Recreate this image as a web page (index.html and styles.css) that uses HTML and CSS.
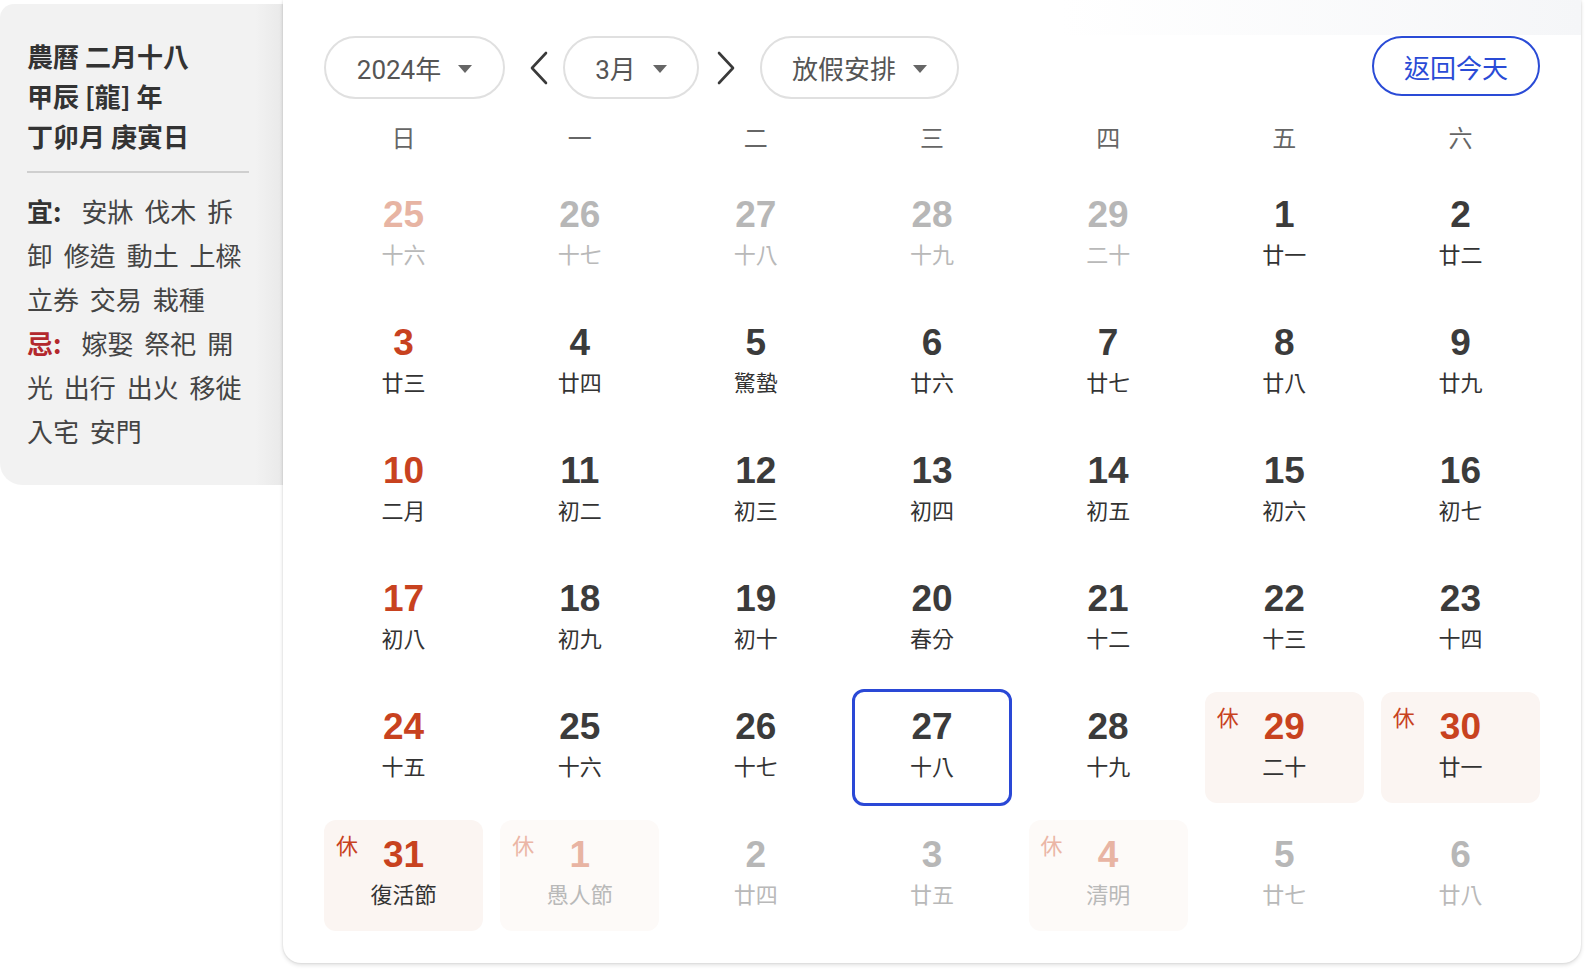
FILE: index.html
```html
<!DOCTYPE html>
<html lang="zh-Hant">
<head>
<meta charset="utf-8">
<title>萬年曆</title>
<link rel="stylesheet" href="styles.css">
</head>
<body>
<div class="page">
  <aside class="almanac">
    <div class="almanac-head">
      <div>農曆 二月十八</div>
      <div>甲辰 [龍] 年</div>
      <div>丁卯月 庚寅日</div>
    </div>
    <div class="almanac-rule"></div>
    <p class="almanac-list"><b class="yi">宜:</b><span>安牀</span> <span>伐木</span> <span>拆</span><span>卸</span> <span>修造</span> <span>動土</span> <span>上樑</span> <span>立券</span> <span>交易</span> <span>栽種</span></p>
    <p class="almanac-list"><b class="ji">忌:</b><span>嫁娶</span> <span>祭祀</span> <span>開</span><span>光</span> <span>出行</span> <span>出火</span> <span>移徙</span> <span>入宅</span> <span>安門</span></p>
  </aside>

  <section class="card">
    <div class="controls">
      <button class="pill pill-year"><span>2024年</span><i class="caret"></i></button>
      <button class="chev chev-prev" aria-label="上個月">
        <svg width="20" height="34" viewBox="0 0 20 34"><polyline points="17,2 3,17 17,32" fill="none" stroke="#3a3a3a" stroke-width="2.6" stroke-linejoin="round" stroke-linecap="round"/></svg>
      </button>
      <button class="pill pill-month"><span>3月</span><i class="caret"></i></button>
      <button class="chev chev-next" aria-label="下個月">
        <svg width="20" height="34" viewBox="0 0 20 34"><polyline points="3,2 17,17 3,32" fill="none" stroke="#3a3a3a" stroke-width="2.6" stroke-linejoin="round" stroke-linecap="round"/></svg>
      </button>
      <button class="pill pill-holiday"><span>放假安排</span><i class="caret"></i></button>
      <button class="today">返回今天</button>
    </div>

    <div class="weekdays">
      <div>日</div><div>一</div><div>二</div><div>三</div><div>四</div><div>五</div><div>六</div>
    </div>

    <div class="grid">
      <div class="day other sun"><div class="num">25</div><div class="lunar">十六</div></div>
      <div class="day other"><div class="num">26</div><div class="lunar">十七</div></div>
      <div class="day other"><div class="num">27</div><div class="lunar">十八</div></div>
      <div class="day other"><div class="num">28</div><div class="lunar">十九</div></div>
      <div class="day other"><div class="num">29</div><div class="lunar">二十</div></div>
      <div class="day"><div class="num">1</div><div class="lunar">廿一</div></div>
      <div class="day"><div class="num">2</div><div class="lunar">廿二</div></div>

      <div class="day sun"><div class="num">3</div><div class="lunar">廿三</div></div>
      <div class="day"><div class="num">4</div><div class="lunar">廿四</div></div>
      <div class="day"><div class="num">5</div><div class="lunar">驚蟄</div></div>
      <div class="day"><div class="num">6</div><div class="lunar">廿六</div></div>
      <div class="day"><div class="num">7</div><div class="lunar">廿七</div></div>
      <div class="day"><div class="num">8</div><div class="lunar">廿八</div></div>
      <div class="day"><div class="num">9</div><div class="lunar">廿九</div></div>

      <div class="day sun"><div class="num">10</div><div class="lunar">二月</div></div>
      <div class="day"><div class="num">11</div><div class="lunar">初二</div></div>
      <div class="day"><div class="num">12</div><div class="lunar">初三</div></div>
      <div class="day"><div class="num">13</div><div class="lunar">初四</div></div>
      <div class="day"><div class="num">14</div><div class="lunar">初五</div></div>
      <div class="day"><div class="num">15</div><div class="lunar">初六</div></div>
      <div class="day"><div class="num">16</div><div class="lunar">初七</div></div>

      <div class="day sun"><div class="num">17</div><div class="lunar">初八</div></div>
      <div class="day"><div class="num">18</div><div class="lunar">初九</div></div>
      <div class="day"><div class="num">19</div><div class="lunar">初十</div></div>
      <div class="day"><div class="num">20</div><div class="lunar">春分</div></div>
      <div class="day"><div class="num">21</div><div class="lunar">十二</div></div>
      <div class="day"><div class="num">22</div><div class="lunar">十三</div></div>
      <div class="day"><div class="num">23</div><div class="lunar">十四</div></div>

      <div class="day sun"><div class="num">24</div><div class="lunar">十五</div></div>
      <div class="day"><div class="num">25</div><div class="lunar">十六</div></div>
      <div class="day"><div class="num">26</div><div class="lunar">十七</div></div>
      <div class="day today-cell"><div class="num">27</div><div class="lunar">十八</div></div>
      <div class="day"><div class="num">28</div><div class="lunar">十九</div></div>
      <div class="day rest"><span class="rest-tag">休</span><div class="num">29</div><div class="lunar">二十</div></div>
      <div class="day rest"><span class="rest-tag">休</span><div class="num">30</div><div class="lunar">廿一</div></div>

      <div class="day rest"><span class="rest-tag">休</span><div class="num">31</div><div class="lunar">復活節</div></div>
      <div class="day rest other"><span class="rest-tag">休</span><div class="num">1</div><div class="lunar">愚人節</div></div>
      <div class="day other"><div class="num">2</div><div class="lunar">廿四</div></div>
      <div class="day other"><div class="num">3</div><div class="lunar">廿五</div></div>
      <div class="day rest other"><span class="rest-tag">休</span><div class="num">4</div><div class="lunar">清明</div></div>
      <div class="day other"><div class="num">5</div><div class="lunar">廿七</div></div>
      <div class="day other"><div class="num">6</div><div class="lunar">廿八</div></div>
    </div>
  </section>
</div>
</body>
</html>
```

FILE: styles.css
```css
* { box-sizing: border-box; }

html, body {
  margin: 0;
  padding: 0;
  background: #fff;
}

body {
  font-family: "Liberation Sans", "Noto Sans CJK TC", sans-serif;
  color: #333;
}

.page {
  display: flex;
  align-items: flex-start;
  width: 1588px;
  height: 970px;
  overflow: hidden;
}

/* ---------- left almanac panel ---------- */
.almanac {
  flex: 0 0 283px;
  margin-top: 4px;
  padding: 32px 24px 32px 27px;
  background: linear-gradient(to right, #f2f2f2 0, #f2f2f2 255px, #e9e9e9 283px);
  border-radius: 14px 0 0 22px;
}

.almanac-head {
  font-family: "Noto Sans CJK TC", sans-serif;
  font-size: 26px;
  font-weight: 700;
  line-height: 40px;
  color: #333;
  white-space: nowrap;
}

.almanac-rule {
  height: 2px;
  width: 222px;
  background: #cfcfcf;
  margin: 15px 0 16px;
}

.almanac-list {
  margin: 0;
  width: 226px;
  font-family: "Noto Sans CJK TC", sans-serif;
  font-size: 26px;
  line-height: 44px;
  color: #444;
  word-spacing: 5px;
}

.almanac-list b {
  display: inline-block;
  font-weight: 700;
  margin-right: 20px;
}
.almanac-list .yi { color: #333; }
.almanac-list .ji { color: #b3282d; }

/* ---------- calendar card ---------- */
.card {
  flex: 0 0 1298px;
  height: 963px;
  padding: 36px 41px 32px;
  background:
    linear-gradient(to right, rgba(246,247,249,0) 60%, #f5f6f8 100%) top left / 100% 35px no-repeat,
    #fff;
  border-radius: 0 0 18px 18px;
  box-shadow: 0 2px 4px rgba(0,0,0,0.13), 0 0 2px rgba(0,0,0,0.12);
  position: relative;
  z-index: 1;
}

.controls {
  display: flex;
  align-items: flex-start;
  height: 63px;
}

button {
  font: inherit;
  background: none;
  border: 0;
  padding: 0;
  margin: 0;
  cursor: pointer;
  white-space: nowrap;
}

.pill {
  flex: 0 0 auto;
  display: flex;
  align-items: center;
  justify-content: center;
  gap: 17px;
  height: 63px;
  padding: 0;
  border: 2px solid #e0e0e0;
  border-radius: 32px;
  background: #fff;
  font-family: "Roboto", "Noto Sans CJK TC", sans-serif;
  font-size: 26px;
  color: #555;
}

.pill-year { width: 181px; }
.pill-month { width: 136px; }
.pill-holiday { width: 199px; }

.caret {
  flex: 0 0 auto;
  width: 0;
  height: 0;
  border-left: 7px solid transparent;
  border-right: 7px solid transparent;
  border-top: 8px solid #666;
  margin-top: 2px;
}

.chev {
  flex: 0 0 auto;
  display: flex;
  align-items: center;
  height: 63px;
}
.chev-prev { margin: 0 14px 0 24px; }
.chev-next { margin: 0 24px 0 17px; }

.today {
  flex: 0 0 auto;
  margin-left: auto;
  width: 168px;
  height: 60px;
  border: 2px solid #2a4bd6;
  border-radius: 30px;
  font-family: "Noto Sans CJK TC", sans-serif;
  font-size: 26px;
  color: #2a4bd6;
}

.weekdays {
  display: grid;
  grid-template-columns: repeat(7, 1fr);
  column-gap: 17px;
  margin-top: 18px;
  height: 40px;
  line-height: 40px;
  text-align: center;
  font-family: "Noto Sans CJK TC", sans-serif;
  font-size: 24px;
  color: #666;
}

.grid {
  display: grid;
  grid-template-columns: repeat(7, 1fr);
  grid-auto-rows: 111px;
  gap: 17px;
  margin-top: 23px;
}

.day {
  position: relative;
  padding-top: 15px;
  text-align: center;
  border-radius: 12px;
}

.num {
  font-family: "Liberation Sans", sans-serif;
  font-weight: 700;
  font-size: 37px;
  line-height: 40px;
  color: #3b3b3b;
}

.lunar {
  margin-top: 4px;
  font-family: "Noto Sans CJK TC", sans-serif;
  font-size: 22px;
  line-height: 28px;
  color: #333;
}

.sun .num { color: #c8421f; }

.other .num { color: #b7b7b7; }
.other .lunar { color: #b9b9b9; }
.other.sun .num { color: #e7b4a3; }

.rest { background: #fbf5f2; }
.rest .num { color: #c8421f; }
.rest.other { background: #fdfaf8; }
.rest.other .num { color: #e8b4a3; }

.rest-tag {
  position: absolute;
  left: 12px;
  top: 10px;
  font-family: "Noto Sans CJK TC", sans-serif;
  font-size: 22px;
  line-height: 28px;
  color: #c8421f;
}
.rest.other .rest-tag { color: #ebb6a6; }

.today-cell {
  border: 3px solid #2a48d6;
  padding-top: 15px;
  margin: -3px 0;
  height: 117px;
}
```
